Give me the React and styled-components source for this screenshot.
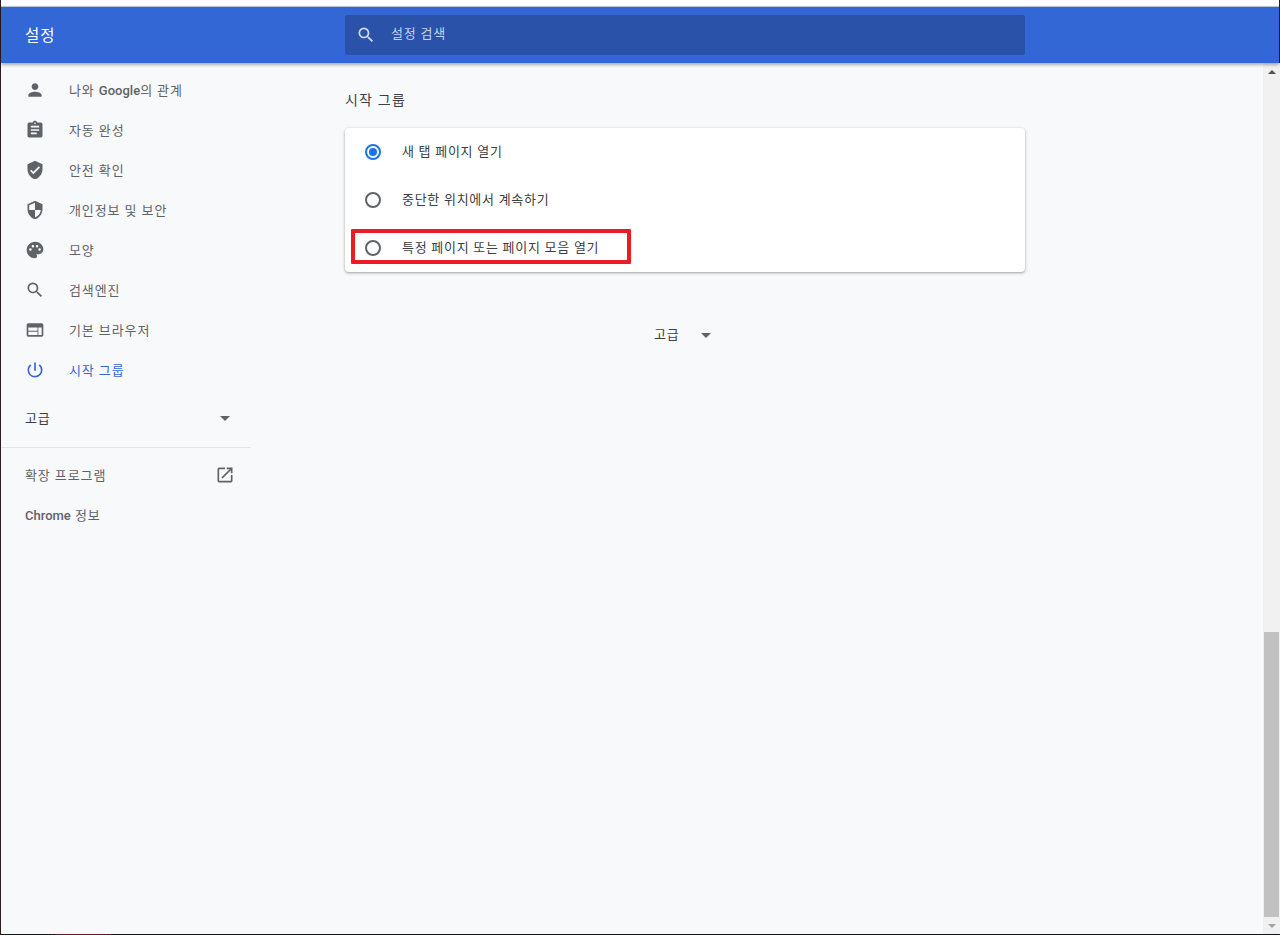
import React from 'react';
import styled, { createGlobalStyle } from 'styled-components';
import {
  MdPerson, MdAssignment, MdVerifiedUser, MdSecurity, MdPalette, MdSearch,
  MdWeb, MdPowerSettingsNew, MdArrowDropDown, MdOpenInNew,
} from 'react-icons/md';

const Global = createGlobalStyle`
  html, body { margin: 0; padding: 0; height: 100%; overflow: hidden; }
  body { font-family: Roboto, "Noto Sans CJK KR", sans-serif; background: #fff; }
`;

const Frame = styled.div`
  position: relative;
  width: 1280px;
  height: 935px;
  box-sizing: border-box;
  display: flex;
  flex-direction: column;
  padding-top: 6px;
  background: #fff;
  border-left: 1px solid #2b1c1e;
  border-right: 1px solid #2b1c1e;
  border-bottom: 1px solid #14171a;
  &::after {
    content: '';
    position: absolute;
    left: 54px;
    bottom: -1px;
    width: 56px;
    height: 1px;
    background: #5a1c22;
  }
`;

const Header = styled.header`
  height: 56px;
  flex: none;
  display: flex;
  align-items: center;
  background: #3367d6;
  border-top: 1px solid #b9c3d8;
  box-shadow: 0 2px 3px rgba(0, 0, 0, 0.3);
  position: relative;
  z-index: 2;
`;

const Title = styled.div`
  width: 344px;
  padding: 0 0 2px 24px;
  box-sizing: border-box;
  color: #fff;
  font-size: 15.5px;
  letter-spacing: 1px;
`;

const SearchBox = styled.div`
  width: 680px;
  height: 40px;
  display: flex;
  align-items: center;
  gap: 15px;
  padding-left: 11px;
  box-sizing: border-box;
  background: #2a52a8;
  border-radius: 2px;
  color: #c4d3f2;
  font-size: 13px;
  letter-spacing: 0.8px;
  line-height: 16px;
  svg { color: #d3def5; }
  span { margin-top: -3px; }
`;

const Body = styled.div`
  flex: 1;
  display: flex;
  min-height: 0;
  background: #f8f9fa;
`;

const Side = styled.nav`
  width: 250px;
  flex: none;
  padding-top: 7px;
`;

const NavRow = styled.div`
  height: 40px;
  display: flex;
  align-items: center;
  padding-left: 24px;
  gap: 24px;
  font-size: 13px;
  letter-spacing: 0.9px;
  color: ${(p) => (p.$active ? '#3367d6' : '#5f6368')};
  svg { flex: none; }
  span { margin-top: -2px; }
  b { font-weight: 500; letter-spacing: 0; }
`;

const PlainRow = styled.div`
  height: 40px;
  display: flex;
  align-items: center;
  justify-content: space-between;
  padding: 0 16px 0 24px;
  font-size: 13px;
  letter-spacing: 0.9px;
  color: #5f6368;
  span { margin-top: -2px; }
  b { font-weight: 500; letter-spacing: 0; }
`;

const AdvancedRow = styled(PlainRow)`
  margin-top: 8px;
  padding-right: 14px;
  color: #3c4043;
`;

const Divider = styled.div`
  height: 1px;
  margin: 9px 0 7px;
  background: #e3e5e8;
`;

const Main = styled.main`
  width: 1012px;
  flex: none;
  padding-left: 94px;
  box-sizing: border-box;
`;

const Column = styled.div`
  width: 680px;
`;

const SectionTitle = styled.h2`
  margin: 0;
  padding-top: 27px;
  height: 38px;
  font-size: 14px;
  font-weight: 400;
  line-height: 20px;
  letter-spacing: 1.2px;
  color: #3c4043;
`;

const Card = styled.div`
  position: relative;
  background: #fff;
  border-radius: 4px;
  box-shadow: 0 1px 2px rgba(60, 64, 67, 0.3), 0 1px 3px 1px rgba(60, 64, 67, 0.15);
`;

const Option = styled.div`
  height: 48px;
  display: flex;
  align-items: center;
  padding-left: 20px;
  gap: 21px;
  font-size: 13px;
  letter-spacing: 0.72px;
  color: #3c4043;
  span { margin-top: -4px; }
`;

const Radio = styled.i`
  width: 16px;
  height: 16px;
  flex: none;
  box-sizing: border-box;
  border-radius: 50%;
  border: 2px solid ${(p) => (p.$on ? '#1a73e8' : '#5f6368')};
  display: flex;
  align-items: center;
  justify-content: center;
  &::after {
    content: '';
    width: 8px;
    height: 8px;
    border-radius: 50%;
    background: ${(p) => (p.$on ? '#1a73e8' : 'transparent')};
  }
`;

const Highlight = styled.div`
  position: absolute;
  left: 6px;
  top: 101px;
  width: 280px;
  height: 35px;
  box-sizing: border-box;
  border: 4px solid #ed1c24;
  border-radius: 1px;
`;

const AdvancedButton = styled.div`
  margin-top: 47px;
  height: 32px;
  display: flex;
  align-items: center;
  padding-left: 309px;
  gap: 14px;
  font-size: 13px;
  letter-spacing: 0.9px;
  color: #3c4043;
  svg { color: #5f6368; }
  span { margin-top: -4px; }
`;

const Scrollbar = styled.div`
  width: 17px;
  flex: none;
  margin-left: auto;
  display: flex;
  flex-direction: column;
  background: #f1f1f1;
  position: relative;
  z-index: 1;
`;

const Arrow = styled.div`
  height: 17px;
  display: flex;
  align-items: center;
  justify-content: center;
  &::after {
    content: '';
    border-left: 4px solid transparent;
    border-right: 4px solid transparent;
    ${(p) => (p.$up ? 'border-bottom: 4px solid #505050;' : 'border-top: 4px solid #a3a3a3;')}
  }
`;

const Track = styled.div`
  flex: 1;
  display: flex;
  flex-direction: column;
  justify-content: flex-end;
`;

const Thumb = styled.div`
  height: 285px;
  margin: 0 1px;
  background: #c1c1c1;
`;

const navItems = [
  { label: <>나와 <b>Google</b>의 관계</>, Icon: MdPerson },
  { label: '자동 완성', Icon: MdAssignment },
  { label: '안전 확인', Icon: MdVerifiedUser },
  { label: '개인정보 및 보안', Icon: MdSecurity },
  { label: '모양', Icon: MdPalette },
  { label: '검색엔진', Icon: MdSearch },
  { label: '기본 브라우저', Icon: MdWeb },
  { label: '시작 그룹', Icon: MdPowerSettingsNew, active: true },
];

const options = [
  { label: '새 탭 페이지 열기', on: true },
  { label: '중단한 위치에서 계속하기' },
  { label: '특정 페이지 또는 페이지 모음 열기' },
];

export default function App() {
  return (
    <>
      <Global />
      <Frame>
        <Header>
          <Title>설정</Title>
          <SearchBox>
            <MdSearch size={20} />
            <span>설정 검색</span>
          </SearchBox>
        </Header>
        <Body>
          <Side>
            {navItems.map(({ label, Icon, active }, i) => (
              <NavRow key={i} $active={active}>
                <Icon size={20} />
                <span>{label}</span>
              </NavRow>
            ))}
            <AdvancedRow>
              <span>고급</span>
              <MdArrowDropDown size={24} color="#5f6368" />
            </AdvancedRow>
            <Divider />
            <PlainRow>
              <span>확장 프로그램</span>
              <MdOpenInNew size={20} />
            </PlainRow>
            <PlainRow><span><b>Chrome</b> 정보</span></PlainRow>
          </Side>
          <Main>
            <Column>
              <SectionTitle>시작 그룹</SectionTitle>
              <Card>
                {options.map((o) => (
                  <Option key={o.label}>
                    <Radio $on={o.on} />
                    <span>{o.label}</span>
                  </Option>
                ))}
                <Highlight />
              </Card>
              <AdvancedButton>
                <span>고급</span>
                <MdArrowDropDown size={24} />
              </AdvancedButton>
            </Column>
          </Main>
          <Scrollbar>
            <Arrow $up />
            <Track><Thumb /></Track>
            <Arrow />
          </Scrollbar>
        </Body>
      </Frame>
    </>
  );
}
